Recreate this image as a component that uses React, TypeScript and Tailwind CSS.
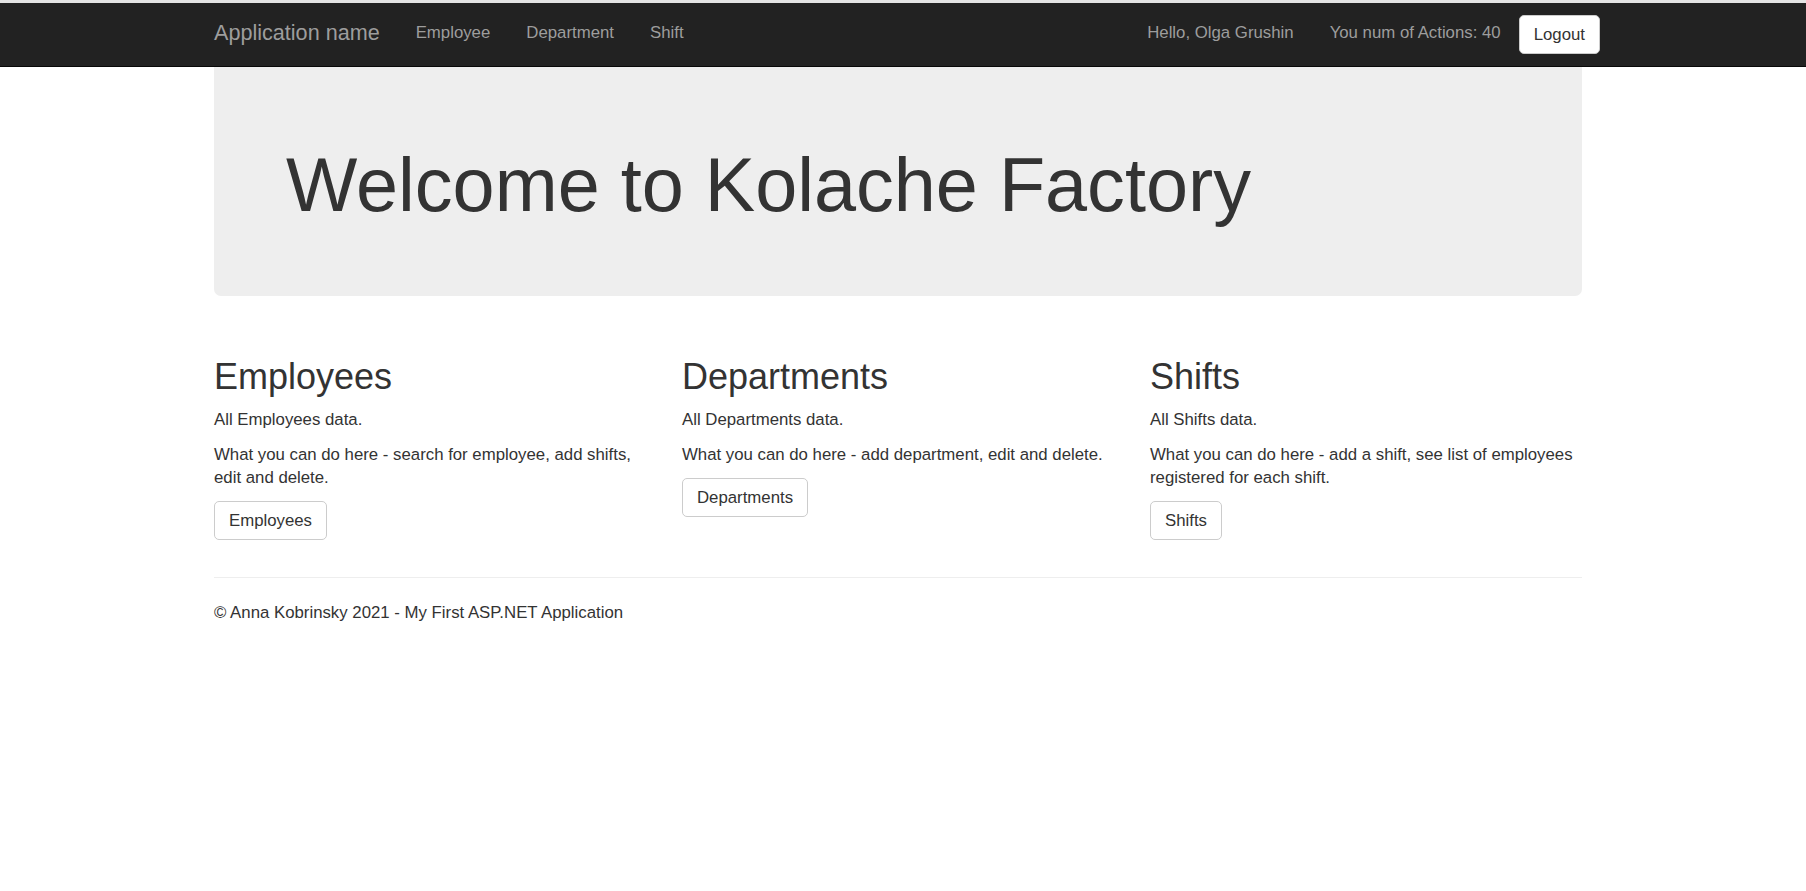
import React from "react";

function Column({ title, sub, desc, btn }: { title: string; sub: string; desc: string; btn: string }) {
  return (
    <div className="px-[18px]">
      <h2 className="text-[36px] leading-[39.6px] font-normal mb-[11px]">{title}</h2>
      <p className="mb-[12px]">{sub}</p>
      <p className="mb-[12px]">{desc}</p>
      <p className="mb-[12px]">
        <a
          href="#"
          className="inline-block px-[14px] py-[7px] border border-[#ccc] rounded-[5px] bg-white text-[#333] leading-[23px]"
        >
          {btn}
        </a>
      </p>
    </div>
  );
}

export default function App() {
  return (
    <div className="min-h-screen bg-white text-[#333] font-['Liberation_Sans',Arial,sans-serif] text-[16.8px] leading-[23px]">
      <div className="h-[3px] bg-[#e4e4e4]" />
      <nav className="h-[64px] bg-[#222] border-b border-[#080808]">
        <div className="w-[1404px] ml-[196px] flex justify-between items-start">
          <div className="flex items-start">
            <a href="#" className="px-[18px] pt-[18px] h-[60px] text-[21.6px] leading-[24px] text-[#9d9d9d]">
              Application name
            </a>
            <a href="#" className="px-[18px] pt-[18px] pb-[18px] text-[#9d9d9d]">Employee</a>
            <a href="#" className="px-[18px] pt-[18px] pb-[18px] text-[#9d9d9d]">Department</a>
            <a href="#" className="px-[18px] pt-[18px] pb-[18px] text-[#9d9d9d]">Shift</a>
          </div>
          <div className="flex items-start">
            <span className="px-[18px] pt-[18px] pb-[18px] text-[#9d9d9d]">Hello, Olga Grushin</span>
            <span className="px-[18px] pt-[18px] pb-[18px] text-[#9d9d9d]">You num of Actions: 40</span>
            <button className="mt-[12px] px-[14px] py-[7px] border border-[#ccc] rounded-[5px] bg-white text-[#333] leading-[23px]">
              Logout
            </button>
          </div>
        </div>
      </nav>
      <div className="w-[1404px] ml-[196px] px-[18px]">
        <div className="bg-[#eee] rounded-b-[7px] px-[72px] pt-[77px] pb-[69px]">
          <h1 className="text-[75.6px] leading-[83px] font-normal">Welcome to Kolache Factory</h1>
        </div>
        <div className="grid grid-cols-3 -mx-[18px] mt-[61px]">
          <Column
            title="Employees"
            sub="All Employees data."
            desc="What you can do here - search for employee, add shifts, edit and delete."
            btn="Employees"
          />
          <Column
            title="Departments"
            sub="All Departments data."
            desc="What you can do here - add department, edit and delete."
            btn="Departments"
          />
          <Column
            title="Shifts"
            sub="All Shifts data."
            desc="What you can do here - add a shift, see list of employees registered for each shift."
            btn="Shifts"
          />
        </div>
        <hr className="mt-[25px] mb-[23px] border-0 border-t border-[#eee]" />
        <footer>
          <p className="mb-[12px]">© Anna Kobrinsky 2021 - My First ASP.NET Application</p>
        </footer>
      </div>
    </div>
  );
}
